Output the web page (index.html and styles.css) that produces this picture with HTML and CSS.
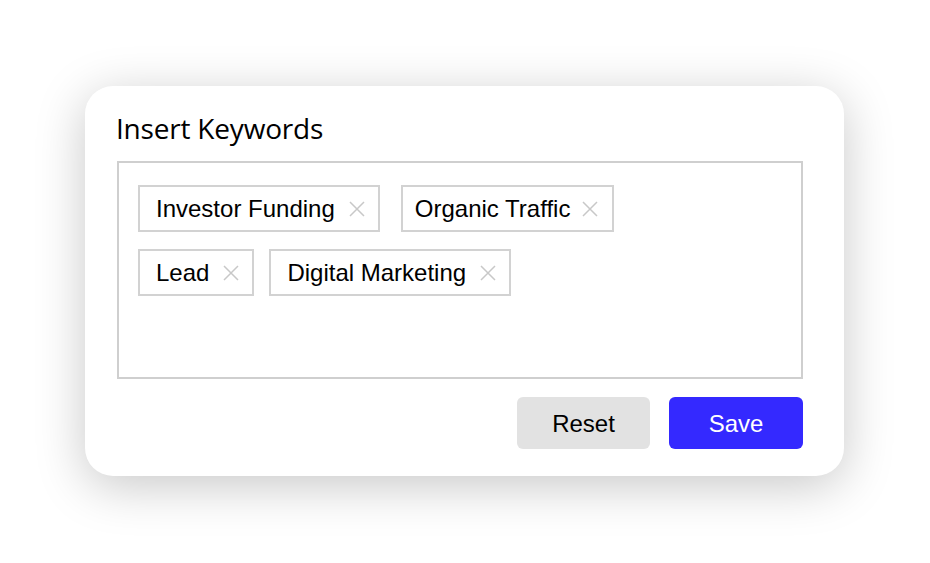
FILE: index.html
```html
<!DOCTYPE html>
<html>
<head>
<meta charset="utf-8">
<link rel="stylesheet" href="styles.css">
</head>
<body>
<div class="page">
  <div class="card">
    <h1 class="title">Insert Keywords</h1>
    <div class="keywords">
      <div class="tag-row">
        <span class="tag"><span class="tag-text">Investor Funding</span><svg class="tag-x" viewBox="0 0 16 16"><path d="M1 1L15 15M15 1L1 15"/></svg></span>
        <span class="tag tag--tight tag--wide-gap"><span class="tag-text">Organic Traffic</span><svg class="tag-x" viewBox="0 0 16 16"><path d="M1 1L15 15M15 1L1 15"/></svg></span>
      </div>
      <div class="tag-row">
        <span class="tag"><span class="tag-text">Lead</span><svg class="tag-x" viewBox="0 0 16 16"><path d="M1 1L15 15M15 1L1 15"/></svg></span>
        <span class="tag"><span class="tag-text">Digital Marketing</span><svg class="tag-x" viewBox="0 0 16 16"><path d="M1 1L15 15M15 1L1 15"/></svg></span>
      </div>
    </div>
    <div class="actions">
      <button class="btn btn--reset">Reset</button>
      <button class="btn btn--save">Save</button>
    </div>
  </div>
</div>
</body>
</html>
```
FILE: styles.css
```css
html, body {
  margin: 0;
  padding: 0;
  background: #ffffff;
}
.page {
  box-sizing: border-box;
  min-height: 563px;
  padding: 86px 0 0 85px;
}
.card {
  box-sizing: border-box;
  width: 759px;
  height: 390px;
  background: #ffffff;
  border-radius: 28px;
  box-shadow: 0 10px 50px rgba(0, 0, 0, 0.22);
  padding: 24px 41px 0 32px;
}
.title {
  margin: 0 0 15px -1px;
  font-family: "Open Sans", sans-serif;
  font-weight: 400;
  font-size: 28px;
  line-height: 36px;
  letter-spacing: -0.2px;
  color: #000000;
}
.keywords {
  box-sizing: border-box;
  height: 218px;
  border: 2px solid #cfcfcf;
  padding: 22px 19px;
  display: flex;
  flex-direction: column;
  gap: 17px;
}
.tag-row {
  display: flex;
  gap: 15px;
}
.tag {
  display: flex;
  align-items: center;
  border: 2px solid #d2d2d2;
  padding: 8px 13px 7px 16px;
  font-family: "Liberation Sans", Arial, sans-serif;
  font-size: 24px;
  line-height: 28px;
  color: #000000;
}
.tag--tight {
  padding-left: 12px;
  padding-right: 14px;
}
.tag--wide-gap {
  margin-left: 6px;
}
.tag--tight .tag-x {
  margin-left: 12px;
}
.tag-x {
  width: 16px;
  height: 16px;
  margin-left: 14px;
  margin-top: -1px;
  fill: none;
  stroke: #c8c8c8;
  stroke-width: 1.5;
}
.actions {
  display: flex;
  justify-content: flex-end;
  gap: 19px;
  margin-top: 18px;
}
.btn {
  height: 52px;
  border: none;
  border-radius: 6px;
  font-family: "Liberation Sans", Arial, sans-serif;
  font-size: 24px;
  padding: 2px 0 0;
  cursor: pointer;
}
.btn--reset {
  width: 133px;
  background: #e2e2e2;
  color: #000000;
}
.btn--save {
  width: 134px;
  background: #3429ff;
  color: #ffffff;
}
```
